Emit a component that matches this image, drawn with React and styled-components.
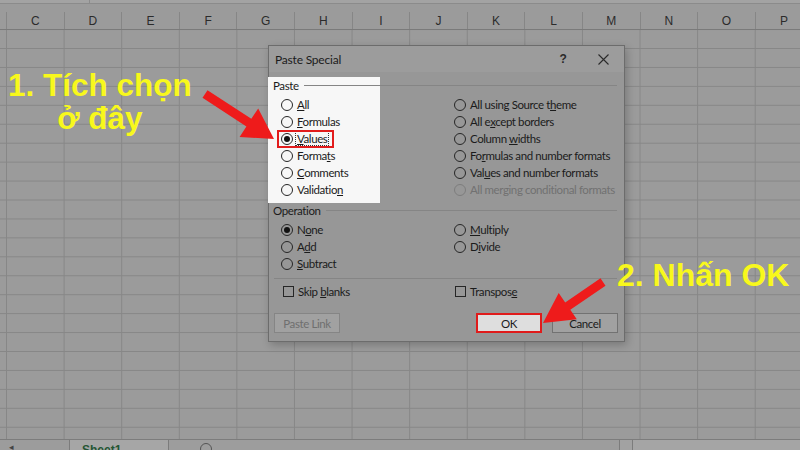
import React from 'react';
import styled, { createGlobalStyle } from 'styled-components';

const GlobalStyle = createGlobalStyle`
  html, body {
    margin: 0;
    padding: 0;
  }
  body {
    width: 800px;
    height: 450px;
    overflow: hidden;
    background: #9b9b9b;
  }
`;

const COL_W = 57.6;
const ROW_H = 18.95;

const Screen = styled.div`
  position: relative;
  width: 800px;
  height: 450px;
  overflow: hidden;
  display: flex;
  flex-direction: column;
  background: #9b9b9b;
  font-family: "Liberation Sans", Arial, sans-serif;
`;

const FormulaBar = styled.div`
  flex: none;
  height: 3px;
  background: #a3a3a3;
  border-bottom: 1px solid #8b8b8b;
  display: flex;
`;

const NameBox = styled.div`
  width: 89px;
  border-right: 1px solid #8b8b8b;
`;

const HeaderRow = styled.div`
  flex: none;
  height: 25px;
  display: flex;
  border-bottom: 1px solid #7a7a7a;
`;

const HeaderSpacer = styled.div`
  flex: none;
  width: 6px;
`;

const ColHead = styled.div`
  flex: none;
  width: ${COL_W}px;
  box-sizing: border-box;
  margin-top: 8px;
  border-left: 1px solid #868686;
  display: flex;
  align-items: center;
  justify-content: center;
  font-size: 12px;
  color: #2b2b2b;
`;

const Cells = styled.div`
  flex: 1;
  background-image:
    linear-gradient(to right, #878787 1px, transparent 1px),
    linear-gradient(to bottom, #878787 1px, transparent 1px);
  background-size: ${COL_W}px 100%, 100% ${ROW_H}px;
  background-position: 6px 0, 0 18px;
`;

const TabBar = styled.div`
  flex: none;
  height: 10px;
  display: flex;
  border-top: 1px solid #7c7c7c;
  background: #a2a2a2;
  overflow: hidden;
`;

const NavBox = styled.div`
  width: 70px;
  box-sizing: border-box;
  border-right: 1px solid #7c7c7c;
  background: #9c9c9c;
  padding-left: 9px;
  font-size: 9px;
  color: #444;
  line-height: 14px;
`;

const SheetTab = styled.div`
  width: 98px;
  box-sizing: border-box;
  margin-top: -1px;
  background: #a6a6a6;
  padding: 4px 0 0 12px;
  font-size: 12px;
  font-weight: bold;
  color: #245634;
`;

const ScrollBox = styled.div`
  width: 452px;
  box-sizing: border-box;
  border-left: 1px solid #7c7c7c;
  border-right: 1px solid #7c7c7c;
  background: #9d9d9d;
  padding: 3px 0 0 31px;
`;

const AddSheet = styled.div`
  width: 12px;
  height: 12px;
  box-sizing: border-box;
  border: 1px solid #555;
  border-radius: 50%;
`;

const Splitter = styled.div`
  width: 12px;
  border-right: 1px solid #7c7c7c;
`;

const HScroll = styled.div`
  flex: 1;
  background: #a5a5a5;
`;

/* ---------- dialog ---------- */

const Dialog = styled.div`
  position: absolute;
  left: 268px;
  top: 45px;
  width: 357px;
  height: 297px;
  box-sizing: border-box;
  border: 1px solid #6c6c6c;
  background: #979797;
  box-shadow: 2px 3px 8px rgba(0, 0, 0, 0.22);
  display: flex;
  flex-direction: column;
  font-family: Lato, "Liberation Sans", sans-serif;
  font-size: 11.5px;
  letter-spacing: -0.4px;
  color: #1b1b1b;
`;

const Highlight = styled.div`
  position: absolute;
  left: -1px;
  top: 31px;
  width: 112px;
  height: 126px;
  background: #f7f7f7;
  z-index: 0;
`;

const RedBox = styled.div`
  position: absolute;
  left: 8px;
  top: 84px;
  width: 57px;
  height: 18px;
  box-sizing: border-box;
  border: 2px solid #e21c1c;
  z-index: 2;
`;

const TitleBar = styled.div`
  flex: none;
  height: 26px;
  display: flex;
  align-items: center;
  padding-left: 6px;
  background: #9c9c9c;
  font-size: 12px;
  letter-spacing: -0.2px;
`;

const Title = styled.div`
  flex: 1;
`;

const TitleButton = styled.div`
  width: ${p => p.$w}px;
  height: 26px;
  display: flex;
  align-items: center;
  justify-content: center;
  margin-left: ${p => p.$gap || 0}px;
  font-family: "Liberation Sans", sans-serif;
  font-size: 12px;
  font-weight: bold;
  color: #2a2a2a;
`;

const Body = styled.div`
  position: relative;
  z-index: 1;
  flex: 1;
  display: flex;
  flex-direction: column;
  padding: 0 6px 8px 4px;
`;

const GroupHeader = styled.div`
  height: 14px;
  margin-top: ${p => p.$top}px;
  display: flex;
  align-items: center;
  padding-right: 1px;
`;

const GroupLine = styled.div`
  flex: 1;
  margin-left: 5px;
  border-top: 1px solid #858585;
`;

const OptionGrid = styled.div`
  display: grid;
  grid-template-columns: 173px 1fr;
  grid-template-rows: repeat(${p => p.$rows}, 17px);
  grid-auto-flow: column;
  padding: 4px 0 0 8px;
`;

const Option = styled.div`
  display: flex;
  align-items: center;
  gap: 4px;
  white-space: nowrap;
  color: ${p => (p.$disabled ? '#717171' : 'inherit')};
`;

const RadioCircle = styled.span`
  position: relative;
  flex: none;
  width: 12px;
  height: 12px;
  box-sizing: border-box;
  border-radius: 50%;
  border: 1px solid ${p => (p.$disabled ? '#7d7d7d' : '#262626')};

  &::after {
    content: '';
    display: ${p => (p.$checked ? 'block' : 'none')};
    position: absolute;
    left: 2px;
    top: 2px;
    width: 6px;
    height: 6px;
    border-radius: 50%;
    background: #111;
  }
`;

const CheckSquare = styled.span`
  flex: none;
  width: 11px;
  height: 11px;
  margin-left: 1px;
  box-sizing: border-box;
  border: 1px solid #262626;
`;

const Key = styled.span`
  text-decoration: underline;
  text-underline-offset: 1px;
`;

const Focus = styled.span`
  outline: 1px dotted #333;
  outline-offset: 0;
  padding: 0 1px;
  margin-left: -1px;
`;

const Divider = styled.div`
  margin: 6px 1px 0 1px;
  border-top: 1px solid #858585;
`;

const CheckRow = styled.div`
  display: grid;
  grid-template-columns: 172px 1fr;
  height: 17px;
  margin-top: 4px;
  padding-left: 9px;
`;

const ButtonRow = styled.div`
  display: flex;
  justify-content: space-between;
  margin-top: auto;
  padding-left: 1px;
`;

const ButtonGroup = styled.div`
  display: flex;
  gap: 10px;
`;

const Button = styled.div`
  width: 66px;
  height: 20px;
  box-sizing: border-box;
  display: flex;
  align-items: center;
  justify-content: center;
  border: ${p => (p.$marked ? '2px solid #e01b1b' : '1px solid #727272')};
  background: ${p => (p.$marked ? '#dedede' : '#a1a1a1')};
  color: ${p => (p.$disabled ? '#6f6f6f' : '#1b1b1b')};
  border-color: ${p => (p.$disabled ? '#858585' : undefined)};
  font-size: 11.5px;
`;

/* ---------- annotations ---------- */

const Callout = styled.div`
  position: absolute;
  left: ${p => p.$x}px;
  top: ${p => p.$y}px;
  font-family: "Liberation Sans", Arial, sans-serif;
  font-weight: bold;
  font-size: ${p => p.$size}px;
  line-height: 33px;
  color: #f8f81c;
  text-align: center;
  white-space: nowrap;
  z-index: 5;
`;

const Overlay = styled.svg`
  position: absolute;
  left: 0;
  top: 0;
  pointer-events: none;
  z-index: 6;
`;

function arrowPoints([sx, sy], [tx, ty], w, h, hw) {
  const dx = tx - sx;
  const dy = ty - sy;
  const len = Math.hypot(dx, dy);
  const ux = dx / len;
  const uy = dy / len;
  const nx = -uy;
  const ny = ux;
  const bx = tx - ux * h;
  const by = ty - uy * h;
  const pts = [
    [sx + nx * w, sy + ny * w],
    [bx + nx * w, by + ny * w],
    [bx + nx * hw, by + ny * hw],
    [tx, ty],
    [bx - nx * hw, by - ny * hw],
    [bx - nx * w, by - ny * w],
    [sx - nx * w, sy - ny * w],
  ];
  return pts.map(p => p.map(v => v.toFixed(1)).join(',')).join(' ');
}

function Label({ text, k }) {
  if (k === undefined || k < 0) return <span>{text}</span>;
  return (
    <span>
      {text.slice(0, k)}
      <Key>{text[k]}</Key>
      {text.slice(k + 1)}
    </span>
  );
}

const pasteOptions = [
  { text: 'All', k: 0 },
  { text: 'Formulas', k: 0 },
  { text: 'Values', k: 0, checked: true, focus: true },
  { text: 'Formats', k: 5 },
  { text: 'Comments', k: 0 },
  { text: 'Validation', k: 9 },
  { text: 'All using Source theme', k: 18 },
  { text: 'All except borders', k: 5 },
  { text: 'Column widths', k: 7 },
  { text: 'Formulas and number formats', k: 2 },
  { text: 'Values and number formats', k: 3 },
  { text: 'All merging conditional formats', disabled: true },
];

const operationOptions = [
  { text: 'None', k: 1, checked: true },
  { text: 'Add', k: 1 },
  { text: 'Subtract', k: 0 },
  { text: 'Multiply', k: 0 },
  { text: 'Divide', k: 1 },
];

const columns = ['C', 'D', 'E', 'F', 'G', 'H', 'I', 'J', 'K', 'L', 'M', 'N', 'O', 'P'];

function RadioOption({ opt }) {
  const label = <Label text={opt.text} k={opt.k} />;
  return (
    <Option $disabled={opt.disabled}>
      <RadioCircle $checked={opt.checked} $disabled={opt.disabled} />
      {opt.focus ? <Focus>{label}</Focus> : label}
    </Option>
  );
}

export default function App() {
  return (
    <Screen>
      <GlobalStyle />
      <FormulaBar>
        <NameBox />
      </FormulaBar>
      <HeaderRow>
        <HeaderSpacer />
        {columns.map(c => (
          <ColHead key={c}>{c}</ColHead>
        ))}
      </HeaderRow>
      <Cells />
      <TabBar>
        <NavBox>◂</NavBox>
        <SheetTab>Sheet1</SheetTab>
        <ScrollBox>
          <AddSheet />
        </ScrollBox>
        <Splitter />
        <HScroll />
      </TabBar>

      <Dialog>
        <Highlight />
        <RedBox />
        <TitleBar>
          <Title>Paste Special</Title>
          <TitleButton $w={30}>?</TitleButton>
          <TitleButton $w={42} $gap={4}>
            <svg width="11" height="11" viewBox="0 0 11 11">
              <path d="M0.5 0.5 L10.5 10.5 M10.5 0.5 L0.5 10.5" stroke="#2a2a2a" strokeWidth="1.1" />
            </svg>
          </TitleButton>
        </TitleBar>
        <Body>
          <GroupHeader $top={6}>
            Paste
            <GroupLine />
          </GroupHeader>
          <OptionGrid $rows={6}>
            {pasteOptions.map(o => (
              <RadioOption key={o.text} opt={o} />
            ))}
          </OptionGrid>
          <GroupHeader $top={5}>
            Operation
            <GroupLine />
          </GroupHeader>
          <OptionGrid $rows={3}>
            {operationOptions.map(o => (
              <RadioOption key={o.text} opt={o} />
            ))}
          </OptionGrid>
          <Divider />
          <CheckRow>
            <Option>
              <CheckSquare />
              <Label text="Skip blanks" k={5} />
            </Option>
            <Option>
              <CheckSquare />
              <Label text="Transpose" k={8} />
            </Option>
          </CheckRow>
          <ButtonRow>
            <Button $disabled>Paste Link</Button>
            <ButtonGroup>
              <Button $marked>OK</Button>
              <Button>Cancel</Button>
            </ButtonGroup>
          </ButtonRow>
        </Body>
      </Dialog>

      <Callout $x={8} $y={69} $size={31.5}>
        1. Tích chọn
        <br />
        ở đây
      </Callout>
      <Callout $x={617} $y={259} $size={32}>
        2. Nhấn OK
      </Callout>

      <Overlay width="800" height="450" viewBox="0 0 800 450">
        <polygon points={arrowPoints([205, 94], [274, 139], 4.5, 30, 17)} fill="#ee1b1b" />
        <polygon points={arrowPoints([603, 282], [543, 323], 4.5, 30, 16)} fill="#ee1b1b" />
      </Overlay>
    </Screen>
  );
}
